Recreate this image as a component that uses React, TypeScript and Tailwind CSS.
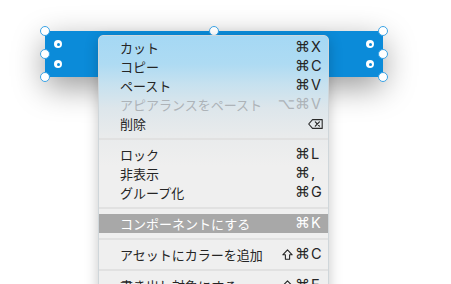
import React from "react";

type Item =
  | { kind: "item"; label: string; mod?: string; key?: string; disabled?: boolean; active?: boolean; del?: boolean }
  | { kind: "sep" };

const items: Item[] = [
  { kind: "item", label: "カット", mod: "⌘", key: "X" },
  { kind: "item", label: "コピー", mod: "⌘", key: "C" },
  { kind: "item", label: "ペースト", mod: "⌘", key: "V" },
  { kind: "item", label: "アピアランスをペースト", mod: "⌥⌘", key: "V", disabled: true },
  { kind: "item", label: "削除", del: true },
  { kind: "sep" },
  { kind: "item", label: "ロック", mod: "⌘", key: "L" },
  { kind: "item", label: "非表示", mod: "⌘", key: "," },
  { kind: "item", label: "グループ化", mod: "⌘", key: "G" },
  { kind: "sep" },
  { kind: "item", label: "コンポーネントにする", mod: "⌘", key: "K", active: true },
  { kind: "sep" },
  { kind: "item", label: "アセットにカラーを追加", mod: "⇧⌘", key: "C" },
  { kind: "sep" },
  { kind: "item", label: "書き出し対象にする", mod: "⇧⌘", key: "E" },
];

function Handle() {
  return <div className="w-[10px] h-[10px] rounded-full bg-white border border-[#3aa3e6]" />;
}

function Inner() {
  return (
    <div className="w-[8px] h-[8px] rounded-full bg-white flex items-center justify-center">
      <div className="w-[3px] h-[3px] rounded-full bg-[#0b8bd9]" />
    </div>
  );
}

function DeleteIcon() {
  return (
    <svg width="15" height="10" viewBox="0 0 15 10" className="block">
      <path d="M4.5 0.6 H14.2 V9.4 H4.5 L0.7 5 Z" fill="none" stroke="#2a2a2a" strokeWidth="1.1" strokeLinejoin="round" />
      <path d="M7.3 2.9 L11.4 7.1 M11.4 2.9 L7.3 7.1" stroke="#2a2a2a" strokeWidth="1.2" strokeLinecap="round" />
    </svg>
  );
}

function ShiftIcon() {
  return (
    <svg width="11" height="11" viewBox="0 0 11 11" className="block mr-[2px]">
      <path d="M5.5 0.8 L10.2 5.8 H7.6 V10.2 H3.4 V5.8 H0.8 Z" fill="none" stroke="currentColor" strokeWidth="1.1" strokeLinejoin="round" />
    </svg>
  );
}

function Mods({ mod }: { mod: string }) {
  const parts = Array.from(mod);
  return (
    <span className="flex items-center">
      {parts.map((p, i) =>
        p === "⇧" ? (
          <ShiftIcon key={i} />
        ) : (
          <span key={i} style={{ fontFamily: '"DejaVu Sans", sans-serif', fontSize: 15 }}>{p}</span>
        )
      )}
    </span>
  );
}

export default function App() {
  return (
    <div className="relative w-[451px] h-[284px] bg-white overflow-hidden" style={{ fontFamily: '"Noto Sans CJK JP", "Noto Sans", sans-serif' }}>
      {/* selected bar on the canvas */}
      <div className="absolute left-[40px] top-[26px] w-[348px] h-[56px]">
        <div className="absolute left-[5px] top-[5px] right-[5px] bottom-[5px] bg-[#0b8bd9] shadow-[0_10px_32px_rgba(0,0,0,0.4)]" />
        <div className="absolute inset-0 flex justify-between">
          <div className="flex flex-col justify-between"><Handle /><Handle /><Handle /></div>
          <div className="flex flex-col"><Handle /></div>
          <div className="flex flex-col justify-between"><Handle /><Handle /><Handle /></div>
        </div>
        <div className="absolute left-[14px] right-[14px] top-[14px] flex justify-between">
          <div className="flex flex-col gap-[12px]"><Inner /><Inner /></div>
          <div className="flex flex-col gap-[12px]"><Inner /><Inner /></div>
        </div>
      </div>

      {/* context menu */}
      <div className="absolute left-[98px] top-[35px] w-[231px] h-[270px] rounded-t-[5px] border border-[#cfd6da] bg-[linear-gradient(to_bottom,#a5d8f4_0px,#aedbf3_28px,#c6e1ef_48px,#dde6eb_72px,#e9ebec_100px,#efefef_130px,#efefef_100%)] shadow-[0_4px_14px_rgba(0,0,0,0.22)] pt-[2px] flex flex-col text-[13px] leading-none">
        {items.map((it, i) =>
          it.kind === "sep" ? (
            <div key={i} className="h-[12px] flex items-center">
              <div className="w-full h-[2px] bg-[#e1e1e1]" />
            </div>
          ) : (
            <div
              key={i}
              className={`h-[19px] flex items-center pl-[21px] pr-[6px] ${it.active ? "bg-[#a8a8a8] text-white" : it.disabled ? "text-[#adb3b8]" : "text-[#252525]"}`}
            >
              <span className="flex-1">{it.label}</span>
              {it.del ? (
                <span className="mr-[-1px]"><DeleteIcon /></span>
              ) : (
                <span className="flex items-center">
                  <Mods mod={it.mod ?? ""} />
                  <span className="w-[11px] ml-[1px]" style={{ fontFamily: 'Inter, "Liberation Sans", sans-serif', fontSize: 14.5 }}>{it.key}</span>
                </span>
              )}
            </div>
          )
        )}
      </div>
    </div>
  );
}
